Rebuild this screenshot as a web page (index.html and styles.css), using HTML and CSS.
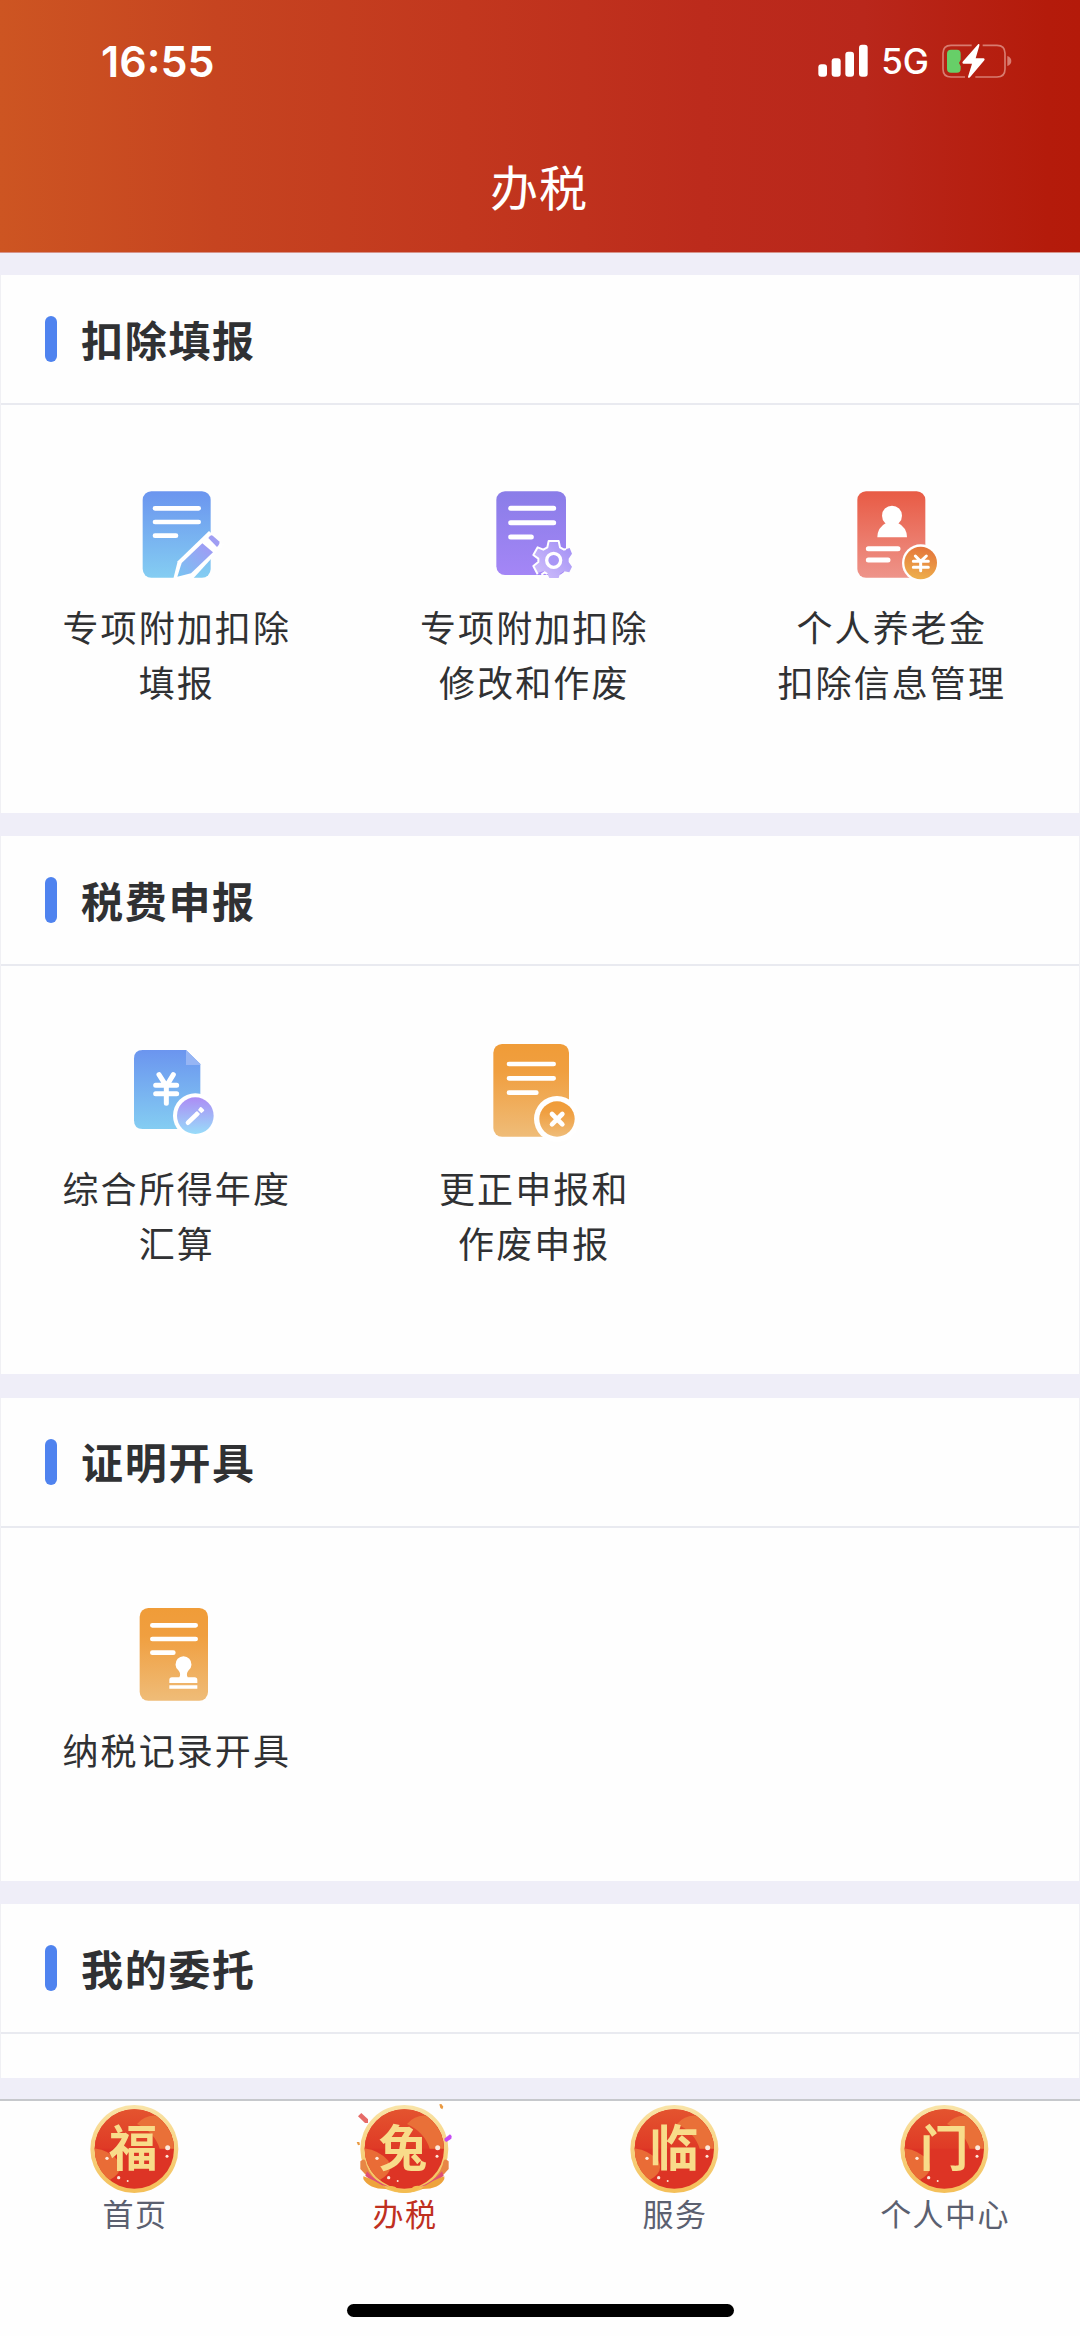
FILE: index.html
```html
<!DOCTYPE html>
<html lang="zh-CN">
<head>
<meta charset="utf-8">
<title>办税</title>
<link rel="stylesheet" href="styles.css">
</head>
<body>
<svg class="defs" width="0" height="0" aria-hidden="true">
  <defs>
    <linearGradient id="blue" x1="0" y1="0" x2="0" y2="1"><stop offset="0" stop-color="#6b95ef"/><stop offset="1" stop-color="#84cdf2"/></linearGradient>
    <linearGradient id="pen" x1="1" y1="0" x2="0" y2="1"><stop offset="0" stop-color="#a497f5"/><stop offset="1" stop-color="#78c4f2"/></linearGradient>
    <linearGradient id="purple" x1="0" y1="0" x2="0" y2="1"><stop offset="0" stop-color="#8a7de8"/><stop offset="1" stop-color="#a486f6"/></linearGradient>
    <linearGradient id="gear" x1="1" y1="0" x2="0" y2="1"><stop offset="0" stop-color="#a08df5"/><stop offset="1" stop-color="#d2c2fb"/></linearGradient>
    <linearGradient id="red" x1="0" y1="0" x2="0" y2="1"><stop offset="0" stop-color="#e85b45"/><stop offset="1" stop-color="#ee948a"/></linearGradient>
    <linearGradient id="coin" x1=".6" y1="0" x2=".4" y2="1"><stop offset="0" stop-color="#e4743a"/><stop offset="1" stop-color="#eeb04c"/></linearGradient>
    <linearGradient id="orange" x1="0" y1="0" x2="0" y2="1"><stop offset="0" stop-color="#f09c38"/><stop offset=".3" stop-color="#f09f40"/><stop offset="1" stop-color="#efbc78"/></linearGradient>
    <linearGradient id="violet" x1="0" y1="0" x2="0" y2="1"><stop offset="0" stop-color="#ac8cf5"/><stop offset="1" stop-color="#98dcf9"/></linearGradient>
    <linearGradient id="gold" x1="0" y1="0" x2="0" y2="1"><stop offset="0" stop-color="#f9e4a8"/><stop offset="1" stop-color="#f4bf58"/></linearGradient>
    <linearGradient id="upper" x1="0" y1="0" x2="0" y2="1"><stop offset="0" stop-color="#e4552f"/><stop offset="1" stop-color="#df3a26"/></linearGradient>
    <clipPath id="disc"><circle cx="224" cy="265" r="119"/></clipPath>
    <g id="badge">
      <circle cx="224" cy="265" r="132" fill="url(#gold)"/>
      <g clip-path="url(#disc)">
        <rect x="100" y="140" width="250" height="250" fill="#dd3425"/>
        <rect x="100" y="140" width="250" height="124" fill="url(#upper)"/>
        <path d="M232 190Q255 160 300 165L350 200V264H300Q285 215 232 190Z" fill="#e97038"/>
        <path d="M100 262Q150 268 176 300Q194 335 150 358L100 350Z" fill="#e96c36"/>
      </g>
      <g fill="#fde9dc"><circle cx="324" cy="261" r="7.500"/><circle cx="322" cy="287" r="4.500"/><circle cx="142" cy="293" r="5"/><circle cx="177" cy="351" r="5"/><circle cx="204" cy="361" r="3"/></g>
    </g>
  </defs>
</svg>

<header class="header">
  <div class="status">
    <span class="time">16:55</span>
    <div class="signals">
      <svg width="50" height="34" viewBox="115 70 150 102" fill="#fff"><rect x="116" y="131" width="26" height="37" rx="9"/><rect x="156" y="113" width="27" height="55" rx="9"/><rect x="197" y="93" width="26" height="75" rx="9"/><rect x="238" y="72" width="26" height="96" rx="9"/></svg>
      <span class="network">5G</span>
      <svg width="70" height="36" viewBox="488 66 210 108">
        <path d="M577 73H515Q491 73 491 97V144Q491 168 515 168H557M610 73H653Q677 73 677 97V144Q677 168 653 168H588" fill="none" stroke="#d87c70" stroke-width="5"/>
        <path d="M684 105Q696 109 696 120T684 135Z" fill="#d87c70"/>
        <path d="M515 86H533Q544 86 544 98V116L539 126L544 136V143Q544 155 533 155H515Q503 155 503 143V98Q503 86 515 86Z" fill="#67cf68"/>
        <path d="M597 69Q602 68 600 74L589 112H613Q618 114 615 118L572 169Q566 173 566 167L578 128H552Q547 126 550 122Z" fill="#fff"/>
      </svg>
    </div>
  </div>
  <h1 class="page-title">办税</h1>
</header>

<main class="content">
  <section class="card">
    <h2 class="card-title"><span>扣除填报</span></h2>
    <div class="grid">
      <a class="item">
        <svg class="icon" viewBox="54 45 360 360">
          <rect x="131" y="94" width="204" height="259" rx="26" fill="url(#blue)"/>
          <path d="M168 145H299M168 186H299M168 227H231" stroke="#fff" stroke-width="14" stroke-linecap="round"/>
          <path d="M330 213L375 254L284 354L222 360L236 304Z" fill="#fff"/>
          <path d="M310 250L342 277L276 340L235 350L248 309Z" fill="url(#pen)"/>
          <path d="M328 234Q335 222 342 228L360 244Q365 251 354 261Z" fill="#a09ef3"/>
        </svg>
        <span class="label">专项附加扣除<br>填报</span>
      </a>
      <a class="item">
        <svg class="icon" viewBox="44 45 360 360">
          <rect x="111" y="94" width="209" height="251" rx="26" fill="url(#purple)"/>
          <path d="M154 145H283M154 188H283M154 231H216" stroke="#fff" stroke-width="15" stroke-linecap="round"/>
          <path d="M268 243H298L302 262L314 269L331 264L338 281L328 296V306L338 320L330 337L314 334L302 341L298 354H270L264 341L252 334L235 339L223 318L237 306V296L223 285L235 264L252 269L264 262Z" fill="url(#gear)"/>
          <path d="M320 267L314 269L302 262L298 243H268L264 262L252 269L235 262L222 285L237 296V306L222 318L235 343M246 344L256 337L264 342" fill="none" stroke="#fff" stroke-width="6" stroke-linejoin="round"/>
          <circle cx="283" cy="301" r="21" fill="#a896f6" stroke="#fff" stroke-width="10"/>
        </svg>
        <span class="label">专项附加扣除<br>修改和作废</span>
      </a>
      <a class="item">
        <svg class="icon" viewBox="33 45 360 360">
          <rect x="109" y="94" width="204" height="259" rx="26" fill="url(#red)"/>
          <circle cx="213" cy="167" r="30" fill="#fff"/>
          <path d="M196 188H230Q258 202 258 232H169Q169 202 196 188Z" fill="#fff"/>
          <path d="M142 266H231M142 300H201" stroke="#fff" stroke-width="15" stroke-linecap="round"/>
          <circle cx="299" cy="309" r="56" fill="#fff"/>
          <circle cx="299" cy="309" r="49" fill="url(#coin)"/>
          <path d="M283 288L299 304L316 288M299 304V332M277 304H322M277 322H322" fill="none" stroke="#fff" stroke-width="9" stroke-linecap="round"/>
        </svg>
        <span class="label">个人养老金<br>扣除信息管理</span>
      </a>
    </div>
  </section>

  <section class="card">
    <h2 class="card-title"><span>税费申报</span></h2>
    <div class="grid">
      <a class="item">
        <svg class="icon" viewBox="54 48 360 360">
          <path d="M131 90H261L304 132V327H131Q105 327 105 301V116Q105 90 131 90Z" fill="url(#blue)"/>
          <path d="M261 90V135H304V132Z" fill="#96b5f4"/>
          <path d="M180 164L202 198L223 164M202 198V250M170 196H233M170 221H233" fill="none" stroke="#fff" stroke-width="15" stroke-linecap="round"/>
          <circle cx="289" cy="287" r="67" fill="#fff"/>
          <circle cx="289" cy="287" r="55" fill="url(#violet)"/>
          <path d="M267 308L293 283" stroke="#fff" stroke-width="14" stroke-linecap="round"/>
          <path d="M297 270L303 262Q306 260 309 263L315 269Q317 272 314 274L307 280Z" fill="#fff"/>
          <path d="M289 278L298 287L303 282L294 273Z" fill="#fff"/>
        </svg>
        <span class="label">综合所得年度<br>汇算</span>
      </a>
      <a class="item">
        <svg class="icon" viewBox="1124 48 360 360">
          <rect x="1182" y="72" width="227" height="278" rx="26" fill="url(#orange)"/>
          <path d="M1229 132H1363M1229 175H1363M1229 218H1311" stroke="#fff" stroke-width="14" stroke-linecap="round"/>
          <circle cx="1373" cy="297" r="69" fill="#fff"/>
          <circle cx="1373" cy="297" r="53" fill="url(#orange)"/>
          <path d="M1358 282L1389 313M1389 282L1358 313" stroke="#fff" stroke-width="14" stroke-linecap="round"/>
        </svg>
        <span class="label">更正申报和<br>作废申报</span>
      </a>
    </div>
  </section>

  <section class="card">
    <h2 class="card-title"><span>证明开具</span></h2>
    <div class="grid">
      <a class="item">
        <svg class="icon" viewBox="54 54 360 360">
          <rect x="122" y="84" width="205" height="278" rx="26" fill="url(#orange)"/>
          <path d="M160 136H290M160 177H290M160 218H223" stroke="#fff" stroke-width="14" stroke-linecap="round"/>
          <path d="M241 292Q247 282 238 271A24 24 0 1 1 269 271Q260 282 266 292H287Q295 292 295 300V309H211V300Q211 292 219 292ZM211 316H295V326H211Z" fill="#fff"/>
        </svg>
        <span class="label">纳税记录开具</span>
      </a>
    </div>
  </section>

  <section class="card last">
    <h2 class="card-title"><span>我的委托</span></h2>
  </section>
</main>

<nav class="tabs">
  <a class="tab">
    <svg class="tab-icon" viewBox="76 121 300 288"><use href="#badge"/><text x="221" y="316" text-anchor="middle">福</text></svg>
    <span>首页</span>
  </a>
  <a class="tab active">
    <svg class="tab-icon" viewBox="76 121 300 288">
      <use href="#badge"/><text x="221" y="316" text-anchor="middle">兔</text>
      <path d="M92 302Q107 287 110 312Q122 352 172 382Q118 358 92 325Z" fill="#e88645"/>
      <path d="M357 302Q342 287 339 312Q327 352 275 382Q332 358 357 325Z" fill="#e88645"/>
      <path d="M112 332Q135 362 178 378Q136 372 107 345Z" fill="#df4e74"/>
      <path d="M337 332Q314 362 271 378Q313 372 342 345Z" fill="#df4e74"/>
      <path d="M101 347Q135 357 172 385Q118 386 101 355ZM344 347Q310 357 274 385Q330 386 344 355Z" fill="#eea33c"/>
      <path d="M174 376Q198 374 203 385Q224 392 246 385Q250 373 273 376Q260 398 224 397Q189 397 174 376Z" fill="#f3bc50"/>
      <path d="M85 167L95 157L115 176V187H106Z" fill="#e66b67"/>
      <path d="M344 234L361 221L366 226L365 234L350 244L345 240Z" fill="#c64bf4"/>
      <path d="M329 131L335 130L341 138L338 146L332 142ZM81 244L89 244L91 252L85 254Z" fill="#e99a43"/>
    </svg>
    <span>办税</span>
  </a>
  <a class="tab">
    <svg class="tab-icon" viewBox="76 121 300 288"><use href="#badge"/><text x="224" y="316" text-anchor="middle">临</text></svg>
    <span>服务</span>
  </a>
  <a class="tab">
    <svg class="tab-icon" viewBox="76 121 300 288"><use href="#badge"/><text x="224" y="316" text-anchor="middle">门</text></svg>
    <span>个人中心</span>
  </a>
</nav>
<div class="home-area"><div class="home-bar"></div></div>
</body>
</html>
```
FILE: styles.css
```css
* { box-sizing: border-box; }

body {
  margin: 0;
  width: 1080px;
  height: 2336px;
  overflow: hidden;
  display: flex;
  flex-direction: column;
  background: #fefefe;
  color: #303133;
  font-family: "Noto Sans CJK SC", sans-serif;
}

.defs { position: absolute; }

.header {
  height: 253px;
  flex: none;
  color: #fff;
  background: linear-gradient(90deg, #cd5522 0%, #c64420 20%, #c2371e 43%, #bc2b1c 65%, #b9271b 80%, #b41b0b 97%, #b41a0a 100%);
  border-bottom: 1px solid #d7938a;
}

.status {
  height: 121px;
  padding: 0 68px 0 101px;
  display: flex;
  align-items: center;
  justify-content: space-between;
  font-family: Inter, sans-serif;
}

.time { font-size: 43px; font-weight: 600; line-height: 60px; }
.signals { display: flex; align-items: center; gap: 13px; }
.network { font-size: 35px; font-weight: 500; line-height: 40px; }

.page-title {
  margin: 28px 2px 0 0;
  font-size: 48px;
  font-weight: 400;
  line-height: 72px;
  letter-spacing: 1px;
  text-align: center;
}

.content {
  height: 1846px;
  flex: none;
  display: flex;
  flex-direction: column;
  gap: 23.4px;
  padding-top: 22px;
  background: #efeef8;
}

.card { background: #fefefe; border: solid #f0f0f4; border-width: 0 1px; }
.card.last { height: 174px; }

.card-title {
  height: 130px;
  margin: 0;
  padding-left: 44px;
  display: flex;
  align-items: center;
  gap: 24px;
  border-bottom: 2px solid #e9eaf0;
  font-size: 42px;
  font-weight: 700;
  letter-spacing: 1.7px;
}

.card-title span { padding-bottom: 2px; }

.card-title::before {
  content: "";
  width: 12px;
  height: 46px;
  border-radius: 6px;
  background: #4f83ef;
}

.grid {
  display: grid;
  grid-template-columns: repeat(3, 357.5px);
  margin-left: -3px;
  padding: 70px 0 104px;
}

.item { display: flex; flex-direction: column; align-items: center; gap: 4px; }
.icon { width: 120px; height: 120px; }

.label {
  font-size: 36px;
  line-height: 55px;
  letter-spacing: 2.1px;
  text-align: center;
}

.tabs {
  height: 153px;
  flex: none;
  display: grid;
  grid-template-columns: repeat(4, 1fr);
  border-top: 2px solid #c6c8cc;
  color: #5b6070;
}

.tab {
  display: flex;
  flex-direction: column;
  align-items: center;
  font-size: 31px;
  line-height: 32px;
  letter-spacing: 1.4px;
}

.tab.active { color: #c0301f; }
.tab-icon { width: 100px; height: 96px; }
.tab-icon text { font-size: 146px; font-weight: 700; fill: #f8dc8a; }

.home-area {
  flex: 1;
  display: flex;
  justify-content: center;
  align-items: flex-end;
  padding-bottom: 19px;
}

.home-bar { width: 387px; height: 13px; border-radius: 7px; background: #000; }
```
